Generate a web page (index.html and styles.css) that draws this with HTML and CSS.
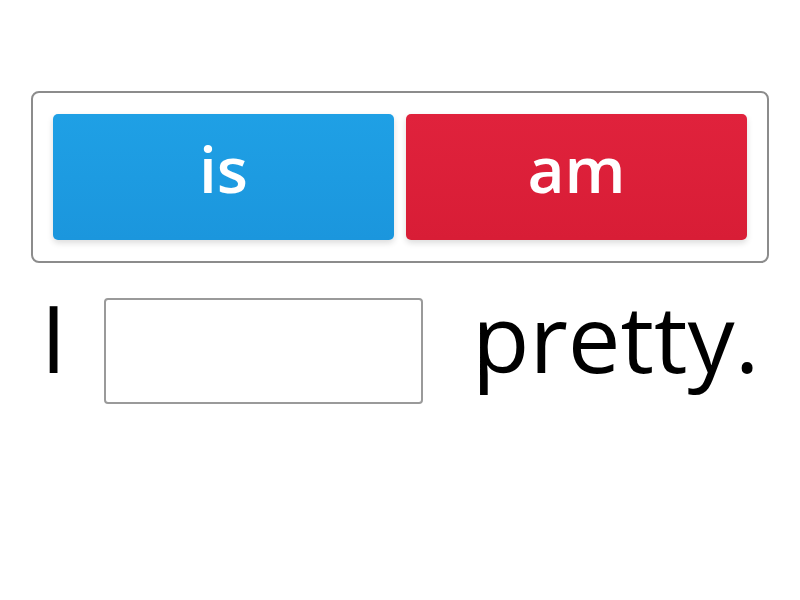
FILE: index.html
```html
<!DOCTYPE html>
<html>
<head>
<meta charset="utf-8">
<link rel="stylesheet" href="styles.css">
</head>
<body>
<div class="page">
  <div class="options">
    <div class="opt blue">is</div>
    <div class="opt red">am</div>
  </div>
  <div class="sentence">
    <span class="word first">I</span>
    <div class="blank"></div>
    <span class="word">pretty.</span>
  </div>
</div>
</body>
</html>
```
FILE: styles.css
```css
html, body { margin: 0; padding: 0; background: #fff; }
body { font-family: "Open Sans", "Liberation Sans", sans-serif; width: 800px; height: 600px; overflow: hidden; }
.page { padding-top: 91px; }
.options {
  margin-left: 31px;
  width: 738px;
  height: 172px;
  box-sizing: border-box;
  border: 2px solid #8c8c8c;
  border-radius: 8px;
  padding: 21px 20px;
  display: flex;
  gap: 12px;
}
.opt {
  flex: 1;
  border-radius: 5px;
  display: flex;
  align-items: center;
  justify-content: center;
  padding-bottom: 18px;
  color: #fff;
  font-size: 64px;
  font-weight: 600;
  box-shadow: 0 3px 6px rgba(0,0,0,0.14);
}
.blue { background: linear-gradient(#1fa0e5, #1b96dd); }
.red { background: linear-gradient(#e0223c, #d81d36); }
.sentence {
  margin-top: 35px;
  display: flex;
  justify-content: center;
  align-items: center;
}
.word { font-size: 94px; color: #000; line-height: 1; position: relative; top: -14px; }
.first { margin-right: 37px; }
.blank {
  width: 319px;
  height: 106px;
  box-sizing: border-box;
  border: 2px solid #9a9a9a;
  border-radius: 4px;
  margin-right: 49px;
}
```
